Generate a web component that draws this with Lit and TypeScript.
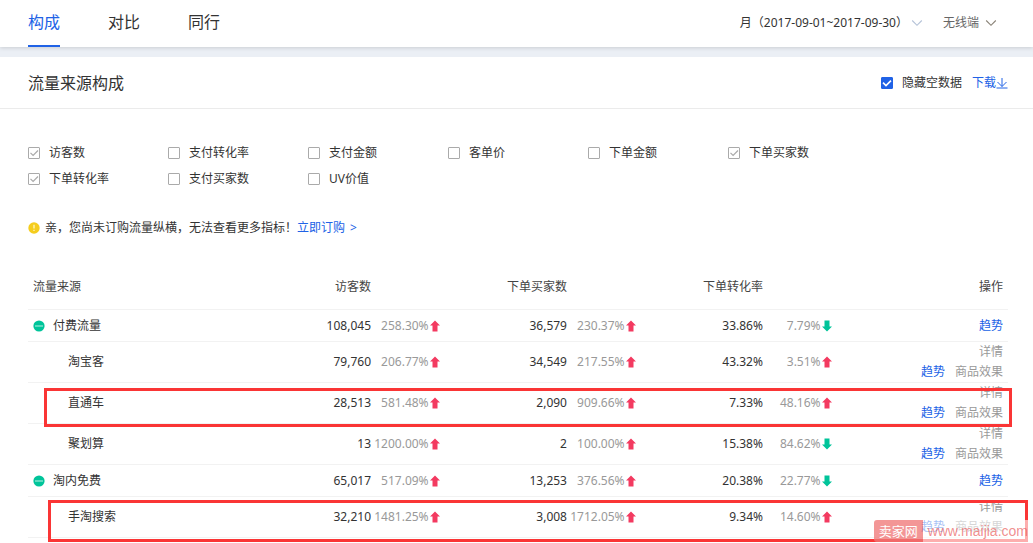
import { LitElement, html, css, svg, nothing } from "lit";
import { customElement, state } from "lit/decorators.js";

interface Metric {
  value: string;
  change: string;
  up: boolean;
}

interface Source {
  name: string;
  group?: boolean;
  mark?: "first" | "second";
  metrics: Metric[];
}

const m = (value: string, change: string, up = true): Metric => ({ value, change, up });

const SOURCES: Source[] = [
  { name: "付费流量", group: true, metrics: [m("108,045", "258.30%"), m("36,579", "230.37%"), m("33.86%", "7.79%", false)] },
  { name: "淘宝客", metrics: [m("79,760", "206.77%"), m("34,549", "217.55%"), m("43.32%", "3.51%")] },
  { name: "直通车", mark: "first", metrics: [m("28,513", "581.48%"), m("2,090", "909.66%"), m("7.33%", "48.16%")] },
  { name: "聚划算", metrics: [m("13", "1200.00%"), m("2", "100.00%"), m("15.38%", "84.62%", false)] },
  { name: "淘内免费", group: true, metrics: [m("65,017", "517.09%"), m("13,253", "376.56%"), m("20.38%", "22.77%", false)] },
  { name: "手淘搜索", mark: "second", metrics: [m("32,210", "1481.25%"), m("3,008", "1712.05%"), m("9.34%", "14.60%")] },
];

const INDICES: [string, boolean][] = [
  ["访客数", true],
  ["支付转化率", false],
  ["支付金额", false],
  ["客单价", false],
  ["下单金额", false],
  ["下单买家数", true],
  ["下单转化率", true],
  ["支付买家数", false],
  ["UV价值", false],
];

const TABS = ["构成", "对比", "同行"];

@customElement("app-root")
export class AppRoot extends LitElement {
  @state() private tab = 0;

  static styles = css`
    :host {
      display: block;
      height: 100vh;
      overflow: hidden;
      position: relative;
      background: #fff;
      color: #333;
      font: 12px/20px "Noto Sans", "Noto Sans CJK SC", sans-serif;
    }
    * {
      box-sizing: border-box;
    }
    a {
      color: #2062e6;
      text-decoration: none;
    }
    button {
      border: 0;
      padding: 0;
      background: none;
      color: inherit;
      font: inherit;
      cursor: pointer;
    }
    svg {
      display: block;
      flex: none;
    }
    .topbar {
      display: flex;
      justify-content: space-between;
      height: 47px;
      padding: 0 36px 0 28px;
      position: relative;
      box-shadow: 0 1px 4px rgba(0, 0, 0, 0.14);
    }
    .tabs {
      display: flex;
      gap: 48px;
    }
    .tab {
      font-size: 16px;
      line-height: 24px;
      padding: 0 0 1px;
      border-bottom: 2px solid transparent;
    }
    .tab.active {
      color: #2062e6;
      border-color: #2062e6;
    }
    .filters {
      display: flex;
      align-items: center;
      gap: 20px;
      padding-bottom: 2px;
    }
    .filter {
      display: flex;
      align-items: center;
      gap: 6px;
    }
    .period {
      gap: 3px;
    }
    .device {
      color: #666;
    }
    .band {
      height: 10px;
      background: #ebeff5;
    }
    .panel-head {
      display: flex;
      justify-content: space-between;
      align-items: center;
      height: 52px;
      padding: 0 25px 0 28px;
      border-bottom: 1px solid #ebebeb;
    }
    h2 {
      margin: 0;
      font-size: 16px;
      line-height: 24px;
      font-weight: 400;
    }
    .tools,
    .check,
    .tip,
    .download {
      display: flex;
      align-items: center;
    }
    .tools {
      gap: 10px;
    }
    .check {
      gap: 9px;
    }
    input {
      appearance: none;
      flex: none;
      width: 12px;
      height: 12px;
      margin: 0;
      border: 1px solid #aaa;
      border-radius: 1px;
      background: center / 10px 10px no-repeat #fff;
    }
    input:checked {
      background-image: url("data:image/svg+xml,%3Csvg xmlns='http://www.w3.org/2000/svg' viewBox='0 0 10 10'%3E%3Cpath d='M1.5 4.8 4.1 7.4 9 2.5' fill='none' stroke='%23aaa' stroke-width='1.2'/%3E%3C/svg%3E");
    }
    input.solid:checked {
      border-color: #2062e6;
      background-color: #2062e6;
      background-image: url("data:image/svg+xml,%3Csvg xmlns='http://www.w3.org/2000/svg' viewBox='0 0 10 10'%3E%3Cpath d='M1 4.6 4 7.6 9 2.6' fill='none' stroke='%23fff' stroke-width='1.6'/%3E%3C/svg%3E");
    }
    .body {
      padding: 34px 25px 0 28px;
    }
    .indices {
      display: grid;
      grid-template-columns: repeat(auto-fill, 140px);
      row-gap: 6px;
      max-width: 900px;
    }
    .tip {
      gap: 5px;
      margin: 29px 0;
    }
    .order {
      display: inline-flex;
      gap: 5px;
    }
    table {
      width: 100%;
      table-layout: fixed;
      border-collapse: separate;
      border-spacing: 0;
    }
    .c-source {
      width: 20%;
    }
    .c-first {
      width: 15%;
    }
    .c-value {
      width: 13%;
    }
    .c-change {
      width: 7%;
    }
    th,
    td {
      height: 41px;
      padding: 0;
      border-bottom: 1px solid #f2f2f2;
      text-align: right;
      font-weight: 400;
      white-space: nowrap;
    }
    thead th,
    thead td {
      height: 43px;
      padding-bottom: 3px;
      color: #444;
    }
    .group th,
    .group td {
      height: 32px;
    }
    .name {
      text-align: left;
      padding-left: 40px;
    }
    thead .name {
      padding-left: 5px;
    }
    .group .name {
      padding-left: 5px;
    }
    .toggle {
      display: flex;
      align-items: center;
      gap: 8px;
    }
    .change {
      color: #999;
    }
    .change span {
      display: flex;
      align-items: center;
      justify-content: flex-end;
      gap: 1px;
    }
    .ops {
      padding-right: 5px;
    }
    .ops div {
      display: flex;
      flex-wrap: wrap;
      justify-content: flex-end;
      column-gap: 10px;
    }
    .detail {
      flex-basis: 100%;
    }
    .mute {
      color: #999;
    }
    tr {
      position: relative;
    }
    .mark {
      position: absolute;
      border: 3px solid #fa3535;
      pointer-events: none;
    }
    .mark.first {
      inset: 5px -4px -3px 16px;
    }
    .mark.second {
      inset: 3px -20px -4px 20px;
    }
    .watermark {
      position: absolute;
      right: 5px;
      bottom: 1px;
      display: flex;
      line-height: 22px;
      white-space: nowrap;
    }
    .brand {
      padding: 0 5px;
      border-radius: 3px 0 0 3px;
      background: rgba(240, 120, 120, 0.78);
      color: #fff;
      font-size: 13px;
    }
    .site {
      padding-left: 5px;
      background: rgba(255, 255, 255, 0.6);
      color: rgba(232, 80, 80, 0.65);
      font-family: "Liberation Sans", sans-serif;
      font-size: 14px;
    }
  `;

  private chevron(color: string) {
    return html`<svg width="12" height="12" viewBox="0 0 12 12" fill="none" stroke=${color} stroke-width="1.1" aria-hidden="true">
      <path d="M1.2 3.5 6 8.3l4.8-4.8" />
    </svg>`;
  }

  private arrow(up: boolean) {
    return html`<svg width="10" height="12" viewBox="0 0 10 12" aria-hidden="true">
      ${up
        ? svg`<path fill="#f33a60" d="M5 .5 10 5.6H7.5v6H2.5v-6H0z" />`
        : svg`<path fill="#00c49a" d="M5 11.5 0 6.4h2.5v-6h5v6H10z" />`}
    </svg>`;
  }

  private row(s: Source) {
    return html`<tr class=${s.group ? "group" : ""}>
      <th class="name" scope="row">
        ${s.group
          ? html`<button class="toggle">
              <svg width="12" height="12" viewBox="0 0 12 12" aria-hidden="true">
                <circle cx="6" cy="6" r="5.6" fill="#00c49a" />
                <path d="M2 6h8" stroke="#b8f0e2" />
              </svg>
              ${s.name}
            </button>`
          : s.name}
        ${s.mark ? html`<div class="mark ${s.mark}"></div>` : nothing}
      </th>
      ${s.metrics.map(
        (x) => html`<td>${x.value}</td>
          <td class="change"><span>${x.change}${this.arrow(x.up)}</span></td>`
      )}
      <td class="ops">
        <div>
          ${s.group
            ? html`<a href="#">趋势</a>`
            : html`<a class="mute detail" href="#">详情</a><a href="#">趋势</a><a class="mute" href="#">商品效果</a>`}
        </div>
      </td>
    </tr>`;
  }

  render() {
    return html`
      <header class="topbar">
        <nav class="tabs">
          ${TABS.map(
            (t, i) => html`<button class="tab ${i === this.tab ? "active" : ""}" @click=${() => (this.tab = i)}>${t}</button>`
          )}
        </nav>
        <div class="filters">
          <button class="filter period">月（2017-09-01~2017-09-30）${this.chevron("#b5c3d8")}</button>
          <button class="filter device">无线端${this.chevron("#8a8378")}</button>
        </div>
      </header>
      <div class="band"></div>
      <main>
        <div class="panel-head">
          <h2>流量来源构成</h2>
          <div class="tools">
            <label class="check"><input class="solid" type="checkbox" checked />隐藏空数据</label>
            <a class="download" href="#">下载<svg width="12" height="12" viewBox="0 0 12 12" fill="none" stroke="#2062e6" aria-hidden="true">
                <path d="M6 1v8.5M1.5 5 6 9.5 10.5 5M.5 11h11" />
              </svg></a>
          </div>
        </div>
        <div class="body">
          <div class="indices">
            ${INDICES.map(
              ([name, on]) => html`<label class="check"><input type="checkbox" ?checked=${on} />${name}</label>`
            )}
          </div>
          <div class="tip">
            <svg width="12" height="12" viewBox="0 0 12 12" aria-hidden="true">
              <circle cx="6" cy="6" r="5.7" fill="#f5cd1d" />
              <path d="M6 2.8v3.7M6 7.7v1.2" stroke="#fff3b8" stroke-width="1.4" />
            </svg>
            <span>亲，您尚未订购流量纵横，无法查看更多指标！<a class="order" href="#"><span>立即订购</span><span>&gt;</span></a></span>
          </div>
          <table>
            <colgroup>
              <col class="c-source" />
              <col class="c-first" />
              <col class="c-change" />
              <col class="c-value" />
              <col class="c-change" />
              <col class="c-value" />
              <col class="c-change" />
              <col />
            </colgroup>
            <thead>
              <tr>
                <th class="name" scope="col">流量来源</th>
                <th scope="col">访客数</th>
                <td></td>
                <th scope="col">下单买家数</th>
                <td></td>
                <th scope="col">下单转化率</th>
                <td></td>
                <th class="ops" scope="col">操作</th>
              </tr>
            </thead>
            <tbody>
              ${SOURCES.map((s) => this.row(s))}
            </tbody>
          </table>
        </div>
      </main>
      <div class="watermark"><span class="brand">卖家网</span><span class="site">www.maijia.com</span></div>
    `;
  }
}
